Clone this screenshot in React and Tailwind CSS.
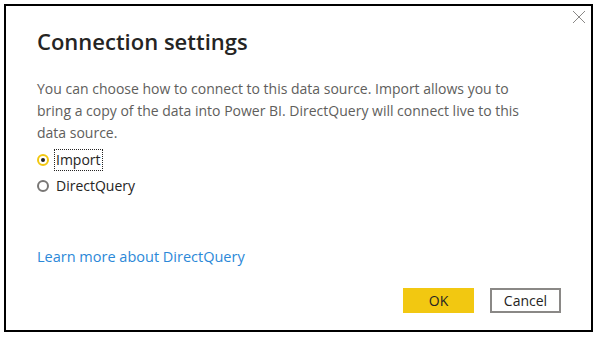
export default function App() {
  return (
    <div className="w-[600px] h-[343px] bg-white p-[4px]" style={{ fontFamily: '"Open Sans", "Noto Sans", sans-serif' }}>
      <div className="relative w-[589px] h-[328px] border-2 border-black bg-white flex flex-col pl-[31px] pr-[30px]">
        {/* Close */}
        <button className="absolute right-[5px] top-[3px] w-[15px] h-[15px] flex items-center justify-center">
          <svg width="14" height="14" viewBox="0 0 14 14" fill="none" stroke="#8a8886" strokeWidth="1">
            <path d="M1 1L13 13M13 1L1 13" />
          </svg>
        </button>

        <h1 className="mt-[21px] text-[22px] leading-[28px] font-semibold text-[#252423]">Connection settings</h1>

        <p className="mt-[23px] text-[14px] leading-[22px] text-[#605e5c] pr-[40px]">
          You can choose how to connect to this data source. Import allows you to bring a copy of the data into
          Power BI. DirectQuery will connect live to this data source.
        </p>

        {/* Radios */}
        <div className="mt-[4px] flex flex-col gap-[3px]">
          <label className="flex items-center gap-[5px] h-[23px] text-[14px] text-[#252423]">
            <span className="w-[12px] h-[12px] rounded-full border-2 border-[#f2c811] flex items-center justify-center">
              <span className="w-[4px] h-[4px] rounded-full bg-[#252423]" />
            </span>
            <span className="border border-dotted border-[#252423] px-[1px] leading-[20px]">Import</span>
          </label>
          <label className="flex items-center gap-[5px] h-[23px] text-[14px] text-[#252423]">
            <span className="w-[12px] h-[12px] rounded-full border-2 border-[#797775]" />
            <span className="px-[2px] leading-[20px]">DirectQuery</span>
          </label>
        </div>

        <a className="mt-[49px] text-[14.5px] leading-[22px] text-[#2b88d8] self-start">Learn more about DirectQuery</a>

        <div className="mt-auto mb-[17px] flex justify-end gap-[16px]">
          <button className="w-[71px] h-[25px] bg-[#f2c811] text-[14px] text-[#252423]">OK</button>
          <button className="w-[71px] h-[25px] border-2 border-[#8a8886] bg-white text-[14px] text-[#252423]">Cancel</button>
        </div>
      </div>
    </div>
  );
}
